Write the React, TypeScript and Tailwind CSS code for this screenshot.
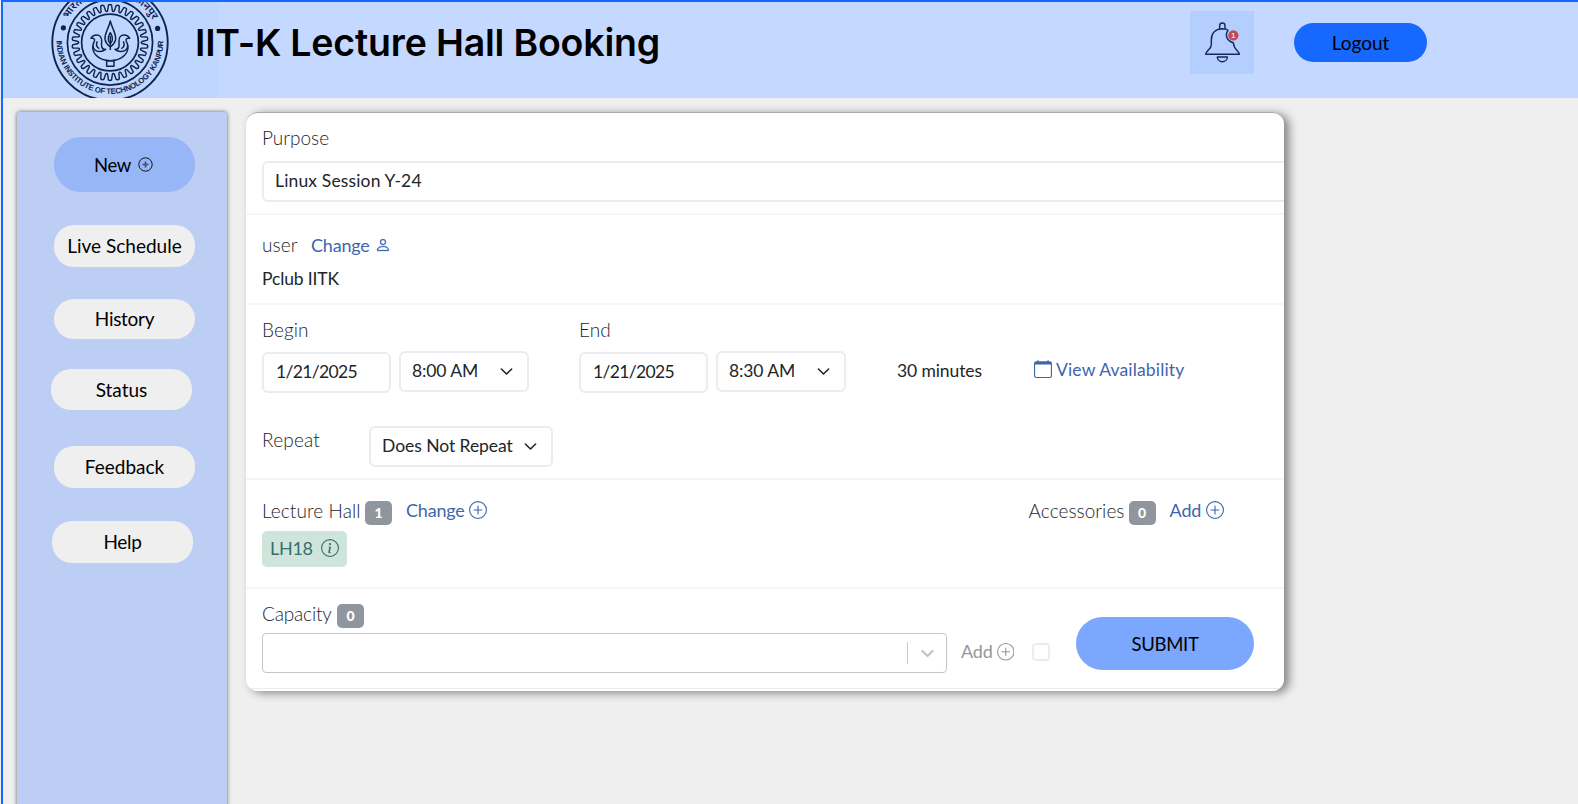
import React from 'react';
import { BsCalendar, BsInfoCircle, BsPerson, BsPlusCircle } from 'react-icons/bs';

const TEETH = 30;

function gearPath() {
  const pt = (r: number, a: number) =>
    `${(110 + r * Math.cos(a)).toFixed(2)} ${(42.5 + r * Math.sin(a)).toFixed(2)}`;
  const step = (Math.PI * 2) / TEETH;
  let d = '';
  for (let i = 0; i < TEETH; i++) {
    const a = i * step - Math.PI / 2 - step * 0.2;
    d += `${i ? 'L' : 'M'}${pt(37.4, a)} Q${pt(38.6, a + step * 0.2)} ${pt(37.4, a + step * 0.4)} `;
    d += `L${pt(32, a + step * 0.55)} Q${pt(30.4, a + step * 0.7)} ${pt(32, a + step * 0.85)} `;
  }
  return d + 'Z';
}

function Crest() {
  return (
    <svg width="216" height="96" viewBox="3 2 216 96" fill="none" stroke="#0d2350" className="block">
      <circle cx="110" cy="42.5" r="57.7" strokeWidth="1.9" />
      <circle cx="110" cy="42.5" r="42.6" strokeWidth="1.7" />
      <circle cx="110" cy="42.5" r="28.4" strokeWidth="1.7" />
      <path d={gearPath()} strokeWidth="1.4" />
      <g fill="#0d2350" stroke="none">
        <circle cx="63.4" cy="27.8" r="2.6" />
        <circle cx="157.6" cy="28.4" r="2.6" />
      </g>
      <path id="motto" d="M56.6 40.5 A53.4 53.4 0 1 0 163.4 40.5" stroke="none" />
      <path id="hindi-start" d="M68 19 A48 48 0 0 1 110 -5.5" stroke="none" />
      <path id="hindi-end" d="M110 -5.5 A48 48 0 0 1 152.5 20" stroke="none" />
      <g fill="#0d2350" stroke="none">
        <text className="font-['Liberation_Sans'] text-[7.8px] font-semibold" textLength="167" lengthAdjust="spacing">
          <textPath href="#motto" textLength="167">INDIAN INSTITUTE OF TECHNOLOGY KANPUR</textPath>
        </text>
        <g className="font-['Noto_Sans'] text-[10.5px] font-semibold">
          <text><textPath href="#hindi-start">भारतीय</textPath></text>
          <text textAnchor="end"><textPath href="#hindi-end" startOffset="100%">कानपुर</textPath></text>
        </g>
      </g>
      <g transform="scale(.3333)" strokeWidth="4.4" strokeLinejoin="round">
        <path d="M331 63C326 86 314 98 315 118C317 130 325 136 331 141C337 136 345 130 347 118C348 98 336 86 331 63Z" />
        <path d="M331 98C325 108 323 116 326 124L331 131L336 124C339 116 337 108 331 98Z" />
        <path d="M331 108V150" />
        <path d="M317 148C303 150 304 136 305 123C306 112 299 105 290 105C282 105 276 109 273 115C281 113 286 117 283 124C278 133 276 141 284 149C291 156 306 157 317 148Z" />
        <path d="M345 148C359 150 358 136 357 123C356 112 363 105 372 105C380 105 386 109 389 115C381 113 376 117 379 124C384 133 386 141 378 149C371 156 356 157 345 148Z" />
        <path d="M292 124C288 133 290 142 298 146M370 124C374 133 372 142 364 146" />
        <path d="M278 137C276 165 302 182 331 182C360 182 386 165 384 137" />
        <path d="M320 182H342V199H320Z" />
      </g>
    </svg>
  );
}

function Bell() {
  return (
    <svg width="64" height="63" viewBox="90 33 192 189" fill="none" stroke="#16295c" strokeWidth="4.4" strokeLinejoin="round">
      <path d="M179 87V77A8 8 0 0 1 195 77V87" />
      <path d="M204 91C201 88 192 86 187 86C165 87 154 101 154 119V134C154 148 137 153 137 163H238C238 153 221 149 220 128C202 124 193 106 204 91Z" />
      <path d="M172 171H202A15 14 0 0 1 172 171Z" />
      <circle cx="220" cy="106" r="15.5" fill="#c14a53" stroke="none" />
      <text x="220" y="114" textAnchor="middle" fill="#dfe6fb" stroke="none" className="font-['Liberation_Sans'] text-[22px] font-bold">1</text>
    </svg>
  );
}

function Chevron({ className }: { className: string }) {
  return (
    <svg width="13" height="13" viewBox="0 0 13 13" fill="none" stroke="currentColor" strokeLinecap="round" strokeLinejoin="round" className={className}>
      <path d="M1.4 4L6.5 9L11.6 4" />
    </svg>
  );
}

function Badge({ n }: { n: string }) {
  return (
    <span className="flex h-6 w-[27px] items-center justify-center rounded-[5px] bg-[#8f969e] pb-px text-[14px] font-black text-white">
      {n}
    </span>
  );
}

function Field({ children, className, chevron }: { children: React.ReactNode; className: string; chevron?: boolean }) {
  return (
    <div className={`flex h-[41px] items-center justify-between rounded-md border-2 border-[#eaecef] pb-px pl-[11px] text-[17.5px] text-[#212529] ${className}`}>
      {children}
      {chevron && <Chevron className="stroke-[1.6]" />}
    </div>
  );
}

const label = 'font-light text-[19px] leading-6 text-[#1d2530]';
const link = 'text-[18px] leading-6 text-[#3e66ac]';
const pill = 'flex items-center justify-center bg-[#efefef] pt-px';

export default function App() {
  return (
    <div className="flex h-[804px] w-[1578px] flex-col overflow-hidden bg-[#efefef] pl-px font-['Lato',sans-serif] text-black">
      <div className="flex min-h-0 flex-1 flex-col border-t-2 border-l-2 border-[#1768ff]">
        <header className="flex h-24 shrink-0 bg-[#c5d8ff]">
          <div className="h-24 w-[216px] bg-[#bfd6ff]">
            <Crest />
          </div>
          <h1 className="-ml-[24px] w-[995px] pt-[17px] font-['Inter',sans-serif] text-[37.5px] leading-[48px] font-semibold tracking-[-0.2px] whitespace-nowrap">
            IIT-K Lecture Hall Booking
          </h1>
          <div className="mt-[9px] h-[63px] w-16 bg-[#b4ceff]">
            <Bell />
          </div>
          <button className="mt-[21px] ml-10 h-[39px] w-[133px] rounded-full bg-[#1768ff] pt-px text-[19px]">Logout</button>
        </header>

        <div className="flex min-h-0 flex-1 pt-[14px] pl-[14px]">
          <aside className="-mb-2 flex w-[210px] flex-col rounded-[3px] bg-[#bccef3] pt-[25px] pl-[37px] text-[19px] shadow-[0_0_4px_rgba(0,0,0,0.6)]">
            <div className="flex h-[55px] w-[141px] items-center justify-center gap-[7px] rounded-[27px] bg-[#96b6f7] pr-[2px] pt-[3px]">
              <span className="text-[18.5px] tracking-[-0.4px]">New</span>
              <svg width="15" height="15" viewBox="0 0 15 15" fill="none" className="mb-[3px]">
                <circle cx="7.5" cy="7.5" r="6.7" stroke="#10151f" strokeWidth="1" />
                <path d="M7.5 4.5V10.5M4.5 7.5H10.5" stroke="#3c5078" strokeWidth="1.7" />
              </svg>
            </div>
            <div className={`${pill} mt-[33px] h-[42px] w-[141px] rounded-[20px]`}>Live Schedule</div>
            <div className={`${pill} mt-[32px] h-[40px] w-[141px] rounded-[20px] tracking-[-0.3px]`}>History</div>
            <div className={`${pill} mt-[30px] -ml-[3px] h-[41px] w-[141px] rounded-[20px]`}>Status</div>
            <div className={`${pill} mt-[36px] h-[42px] w-[141px] rounded-[20px]`}>Feedback</div>
            <div className={`${pill} mt-[33px] -ml-[2px] h-[42px] w-[141px] rounded-[20px] tracking-[-0.35px]`}>Help</div>
          </aside>

          <main className="ml-[19px] h-[579px] w-[1038px] rounded-xl shadow-[5px_2px_10px_rgba(0,0,0,0.45)]">
            <div className="flex h-full flex-col overflow-hidden rounded-xl border-t border-[#a9a9a9] bg-white">
              <section className="h-[102px] shrink-0 border-b-2 border-[#f6f6f6] pt-[13px] pl-4">
                <div className={label}>Purpose</div>
                <Field className="mt-[11px] w-[1040px]"><span className="tracking-[0.15px]">Linux Session Y-24</span></Field>
              </section>

              <section className="h-[90px] shrink-0 border-b-2 border-[#f6f6f6] pt-[18px] pl-4">
                <div className="flex items-center">
                  <span className={`${label} w-[49px] tracking-[0.1px]`}>user</span>
                  <span className={`${link} tracking-[-0.2px]`}>Change</span>
                  <BsPerson className="ml-[5px] size-4 stroke-[0.3] text-[#3e66ac]" />
                </div>
                <div className="mt-[10px] text-[17.5px] leading-6 tracking-[-0.13px] text-[#212529]">Pclub IITK</div>
              </section>

              <section className="h-[175px] shrink-0 border-b-2 border-[#f6f6f6] pt-[13px] pl-4">
                <div className={`${label} flex`}>
                  <span className="w-[317px] tracking-[0.1px]">Begin</span>
                  <span>End</span>
                </div>
                <div className="mt-[9px] flex items-start">
                  <Field className="mt-px w-[129px]"><span className="ml-px tracking-[-0.65px]">1/21/2025</span></Field>
                  <Field chevron className="ml-2 w-[130px] pr-3.5"><span className="tracking-[-0.1px]">8:00 AM</span></Field>
                  <Field className="mt-px ml-[50px] w-[129px]"><span className="ml-px tracking-[-0.65px]">1/21/2025</span></Field>
                  <Field chevron className="ml-2 w-[130px] pr-3.5"><span className="tracking-[-0.1px]">8:30 AM</span></Field>
                  <span className="mt-[8px] ml-[51px] w-[137px] text-[17.5px] leading-6 tracking-[-0.1px] text-[#212529]">30 minutes</span>
                  <BsCalendar className="mt-[9px] size-[18px] text-[#3e66ac]" />
                  <span className="mt-[7px] ml-1 text-[17.5px] leading-6 tracking-[0.15px] text-[#3e66ac]">View Availability</span>
                </div>
                <div className="mt-[33px] flex items-start">
                  <span className={`${label} mt-[2px] w-[107px] tracking-[0.2px]`}>Repeat</span>
                  <Field chevron className="w-[184px] pr-3.5"><span className="tracking-[-0.05px]">Does Not Repeat</span></Field>
                </div>
              </section>

              <section className="h-[109px] shrink-0 border-b-2 border-[#f6f6f6] pt-[19px] pl-4">
                <div className="flex items-start">
                  <span className={`${label} w-[103px] tracking-[0.1px]`}>Lecture Hall</span>
                  <span className="mt-[2px]"><Badge n="1" /></span>
                  <span className={`${link} -mt-px ml-[14px] tracking-[-0.2px]`}>Change</span>
                  <BsPlusCircle className="mt-[2px] ml-[4px] size-[18px] text-[#3e66ac]" />
                  <span className={`${label} ml-[542px] w-[100px] tracking-[0.05px]`}>Accessories</span>
                  <span className="mt-[2px]"><Badge n="0" /></span>
                  <span className={`${link} -mt-px ml-[14px] tracking-[-0.2px]`}>Add</span>
                  <BsPlusCircle className="mt-[2px] ml-[5px] size-[18px] text-[#3e66ac]" />
                </div>
                <div className="mt-[6px] flex h-9 w-[85px] items-center rounded-[5px] bg-[#cfe5db] pl-2 text-[18px] tracking-[-0.3px] text-[#33706f]">
                  <span className="mb-0.5">LH18</span>
                  <BsInfoCircle className="mb-0.5 ml-2 size-[18px]" />
                </div>
              </section>

              <section className="flex h-[100px] shrink-0 border-b border-[#ececec] pl-4">
                <div className="w-[685px] pt-[13px]">
                  <div className="flex">
                    <span className={`${label} w-[75px] tracking-[-0.15px]`}>Capacity</span>
                    <span className="mt-[2px]"><Badge n="0" /></span>
                  </div>
                  <div className="mt-[5px] flex h-[40px] items-center justify-end rounded-[4px] border border-[#c4c6c9] pr-3">
                    <span className="mr-[13px] h-[22px] w-px bg-[#cccccc]" />
                    <Chevron className="stroke-[2.2] text-[#c4c4c4]" />
                  </div>
                </div>
                <span className="mt-[50px] ml-[14px] text-[18px] leading-6 tracking-[-0.2px] text-[#93979c]">Add</span>
                <BsPlusCircle className="mt-[54px] ml-[4px] size-[17.5px] text-[#93979c]" />
                <span className="mt-[54px] ml-[18px] size-[18px] rounded-[4px] border-2 border-[#eaecef]" />
                <button className="mt-[28px] ml-[26px] h-[53px] w-[178px] rounded-[27px] bg-[#7ba7ff] pt-[3px] text-[18.5px] tracking-[-0.3px]">SUBMIT</button>
              </section>
            </div>
          </main>
        </div>
      </div>
    </div>
  );
}
